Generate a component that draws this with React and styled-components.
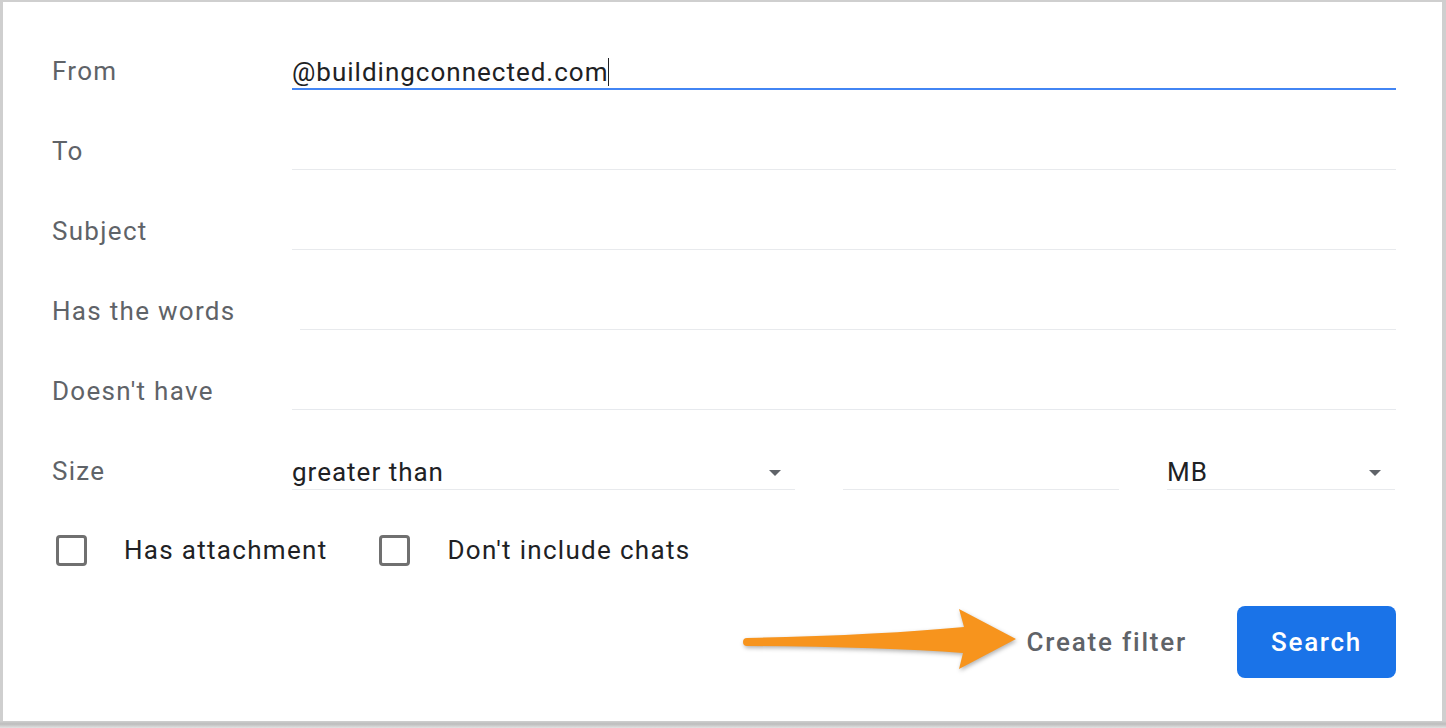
import styled, { createGlobalStyle } from "styled-components";

const GlobalStyle = createGlobalStyle`
  html, body {
    margin: 0;
    padding: 0;
    background: #cfcfcf;
    font-family: Roboto, "Liberation Sans", Arial, sans-serif;
  }
`;

// outer frame of the screenshot
const Frame = styled.div`
  width: 1446px;
  height: 728px;
  box-sizing: border-box;
  padding: 2px 4px 7px 3px;
  background: linear-gradient(to bottom, #cfcfcf 0, #cfcfcf 721px, #bdbdbd 724px, #e2e2e2 728px);
`;

const Card = styled.div`
  height: 100%;
  box-sizing: border-box;
  background: #fff;
  padding: 8px 46px 0 49px;
`;

const Row = styled.div`
  display: grid;
  grid-template-columns: 240px 1fr;
  align-items: end;
  height: 80px;
`;

const Label = styled.div`
  font-size: 26px;
  line-height: 28px;
  letter-spacing: 1.3px;
  color: #5f6368;
  padding-bottom: 5px;
`;

const Field = styled.div`
  height: 28px;
  line-height: 28px;
  font-size: 26px;
  letter-spacing: 1px;
  color: #202124;
  margin-left: ${(p) => p.$indent || 0}px;
  border-bottom: ${(p) => (p.$active ? "2px solid #4285f4" : "1px solid #e8eaed")};
  padding-bottom: ${(p) => (p.$active ? 2 : 3)}px;
  display: flex;
  align-items: center;
`;

const Caret = styled.span`
  display: inline-block;
  width: 1px;
  height: 28px;
  background: #202124;
  margin-left: 0;
`;

const SizeFields = styled.div`
  display: grid;
  grid-template-columns: 503px 276px 228px;
  column-gap: 48px;
  align-items: end;
`;

const Select = styled(Field)`
  justify-content: space-between;
  padding-right: 14px;
`;

const DropArrow = styled.span`
  width: 0;
  height: 0;
  margin-top: 2px;
  border-left: 6px solid transparent;
  border-right: 6px solid transparent;
  border-top: 6px solid #5f6368;
`;

const CheckRow = styled.div`
  display: flex;
  align-items: center;
  height: 120px;
  padding-left: 4px;
`;

const CheckItem = styled.label`
  display: flex;
  align-items: center;
  gap: 37px;
  margin-right: 52px;
  font-size: 26px;
  letter-spacing: 1.3px;
  color: #202124;
`;

const Box = styled.span`
  width: 25px;
  height: 25px;
  border: 3px solid #707070;
  border-radius: 4px;
`;

const Actions = styled.div`
  position: relative;
  display: flex;
  justify-content: flex-end;
  align-items: center;
  gap: 50px;
  margin-top: -4px;
`;

const TextButton = styled.button`
  border: none;
  background: none;
  padding: 0;
  font-family: inherit;
  font-size: 26px;
  font-weight: 500;
  letter-spacing: 1.8px;
  color: #5f6368;
  cursor: pointer;
`;

const PrimaryButton = styled.button`
  width: 159px;
  height: 72px;
  border: none;
  border-radius: 8px;
  background: #1a73e8;
  color: #fff;
  font-family: inherit;
  font-size: 26px;
  font-weight: 500;
  letter-spacing: 1.7px;
  cursor: pointer;
`;

// orange annotation arrow laid over the actions row
const Arrow = styled.svg`
  position: absolute;
  left: 690px;
  top: -2px;
  width: 300px;
  height: 76px;
  overflow: visible;
  filter: drop-shadow(1px 2px 2px rgba(0, 0, 0, 0.3));
`;

const textRows = [
  { label: "To" },
  { label: "Subject" },
  { label: "Has the words", indent: 8 },
  { label: "Doesn't have" },
];

export default function App() {
  return (
    <>
      <GlobalStyle />
      <Frame>
        <Card>
          <Row>
            <Label>From</Label>
            <Field $active>
              @buildingconnected.com
              <Caret />
            </Field>
          </Row>
          {textRows.map((r) => (
            <Row key={r.label}>
              <Label>{r.label}</Label>
              <Field $indent={r.indent} />
            </Row>
          ))}
          <Row>
            <Label>Size</Label>
            <SizeFields>
              <Select>
                greater than
                <DropArrow />
              </Select>
              <Field />
              <Select>
                MB
                <DropArrow />
              </Select>
            </SizeFields>
          </Row>
          <CheckRow>
            <CheckItem>
              <Box />
              Has attachment
            </CheckItem>
            <CheckItem>
              <Box />
              Don't include chats
            </CheckItem>
          </CheckRow>
          <Actions>
            <Arrow viewBox="0 0 300 76">
              <path
                d="M5,34 Q140,31 222,23 L217,5 L274,35 L217,65 L221,49 Q140,43 5,42 A4,4 0 0 1 5,34 Z"
                fill="#f7941d"
              />
            </Arrow>
            <TextButton>Create filter</TextButton>
            <PrimaryButton>Search</PrimaryButton>
          </Actions>
        </Card>
      </Frame>
    </>
  );
}
